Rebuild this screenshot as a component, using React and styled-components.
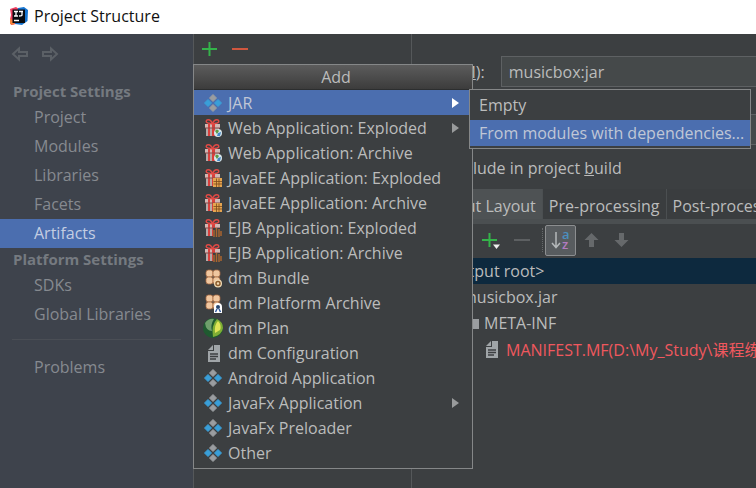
import { Fragment } from "react";
import styled, { createGlobalStyle, css } from "styled-components";

const GlobalStyle = createGlobalStyle`
  * {
    box-sizing: border-box;
  }
  body {
    margin: 0;
    background: #3c3f41;
    font-family: "Open Sans", "Noto Sans CJK SC", sans-serif;
    font-size: 16px;
    overflow: hidden;
  }
  button,
  input {
    font: inherit;
    color: inherit;
  }
`;

const Window = styled.div`
  display: flex;
  flex-direction: column;
  min-height: 100vh;
  color: #bbbcbc;
`;

const TitleBar = styled.header`
  display: flex;
  align-items: center;
  gap: 5px;
  height: 34px;
  padding: 0 9px 2px;
  background: #fff;
  color: #111;
`;

const Title = styled.h1`
  margin: 0;
  font-size: 16px;
  font-weight: 400;
`;

const Body = styled.main`
  display: flex;
  flex: 1;
`;

const Sidebar = styled.nav`
  flex: 0 0 193px;
  background: #3e434c;
  color: #868a90;
`;

const History = styled.div`
  display: flex;
  gap: 14px;
  height: 46px;
  padding: 11px 0 0 11px;
`;

const IconButton = styled.button`
  display: flex;
  align-items: center;
  justify-content: center;
  height: 18px;
  padding: 0;
  border: 0;
  background: none;
`;

const SidebarHeading = styled.h2`
  margin: 0;
  padding-left: 13px;
  font-size: 15px;
  font-weight: 700;
  line-height: 23px;
  color: #757a80;
`;

const SidebarItem = styled.a`
  display: block;
  padding-left: 34px;
  line-height: 29px;
  color: ${({ $active }) => ($active ? "#c3cde2" : "inherit")};
  background: ${({ $active }) => ($active ? "#4b6eaf" : "none")};
  text-decoration: none;
`;

const SidebarDivider = styled.hr`
  height: 1px;
  margin: 10px 12px 13px;
  border: 0;
  background: #4a4e55;
`;

const ArtifactList = styled.section`
  position: relative;
  flex: 0 0 219px;
  border: solid #55585a;
  border-width: 0 1px;
`;

const ListToolbar = styled.div`
  display: flex;
  gap: 11px;
  padding: 6px 7px;
`;

const popup = css`
  position: absolute;
  border: 1px solid #858788;
  background: #3c3f41;
`;

const Menu = styled.div`
  ${popup}
  z-index: 1;
  top: 30px;
  left: -1px;
  width: 280px;
  padding-bottom: 3px;
`;

const MenuTitle = styled.div`
  height: 25px;
  padding-left: 6px;
  border-bottom: 1px solid #2c2e2f;
  background: linear-gradient(#5c5c5c, #3c3c3c);
  line-height: 24px;
  text-align: center;
`;

const MenuItem = styled.button`
  display: flex;
  align-items: center;
  width: 100%;
  height: 25px;
  padding: 0 12px 0 8px;
  border: 0;
  background: ${({ $active }) => ($active ? "#4b6eaf" : "none")};
  color: ${({ $active }) => ($active ? "#c0c7d6" : "inherit")};
  text-align: left;
  white-space: nowrap;

  svg {
    flex: none;
  }
`;

const MenuLabel = styled.span`
  flex: 1;
  margin-left: 4px;
`;

const Submenu = styled.div`
  ${popup}
  z-index: 2;
  top: 24px;
  left: 275px;
  width: 282px;
  padding-bottom: 2px;
`;

const SubmenuItem = styled(MenuItem)`
  height: ${({ $active }) => ($active ? "26px" : "30px")};
  padding: 0 4px 0 9px;
`;

const Details = styled.section`
  display: flex;
  flex: 1;
  flex-direction: column;
  min-width: 0;
  overflow: hidden;
  white-space: nowrap;
`;

const Field = styled.div`
  display: flex;
  align-items: center;
  gap: 16px;
  margin-top: 22px;
`;

const FieldLabel = styled.label`
  flex: 0 0 72px;
  display: flex;
  justify-content: flex-end;
`;

const TextInput = styled.input`
  flex: 1;
  min-width: 0;
  height: 31px;
  padding: 0 7px;
  border: 1px solid #5e6163;
  border-right: 0;
  background: #45494a;
`;

const DirectoryField = styled(Field)`
  margin-top: 27px;
`;

const CheckRow = styled.label`
  display: flex;
  align-items: center;
  gap: 6px;
  height: 28px;
  margin: 9px 0 0 17px;

  input {
    width: 16px;
    height: 16px;
    margin: 0;
  }
`;

const Tabs = styled.div`
  display: flex;
  height: 35px;
  margin-top: 7px;
  padding-left: 10px;
  border-bottom: 5px solid #4b4f51;
`;

const Tab = styled.button`
  flex: none;
  padding: 3px 6px 0;
  border: 0;
  border-right: 1px solid #4b4f51;
  background: ${({ $active }) => ($active ? "#4e5254" : "#3a3d3f")};
`;

const Toolbar = styled.div`
  display: flex;
  align-items: center;
  gap: 7px;
  height: 34px;
  padding: 0 0 2px 69px;
`;

const ToolGroup = styled.div`
  display: flex;
  align-items: center;
  gap: ${({ $gap }) => $gap}px;
`;

const ToolDivider = styled.span`
  height: 24px;
  margin-left: 4px;
  border-left: 1px dotted #66696b;
`;

const SortButton = styled(IconButton)`
  width: 31px;
  height: 31px;
  border: 1px solid #8c8e90;
  border-radius: 2px;
  background: #585c5f;
`;

const Tree = styled.ul`
  margin: 0;
  padding: 0;
  list-style: none;
`;

const TreeRow = styled.li`
  display: flex;
  align-items: center;
  gap: 4px;
  height: 26px;
  padding-left: ${({ $level }) => 2 + $level * 22}px;
  color: ${({ $missing }) => ($missing ? "#f0585e" : "inherit")};
  background: ${({ $active }) => ($active ? "#0d293e" : "none")};

  svg {
    flex: none;
  }
`;

const ArrowOutline = ({ flip }) => (
  <svg width="17" height="16" viewBox="0 0 17 16" fill="none" stroke="#5b6066" strokeWidth="2">
    <path d={flip ? "M15 8 9 2.500V6H1V10H9V13.500Z" : "M2 8 8 2.500V6H16V10H8V13.500Z"} />
  </svg>
);

const PlusIcon = ({ menu }) => (
  <svg width="20" height="18" viewBox="0 0 20 18">
    <path d="M8.500 2V16M1 9H16" stroke="#34b34a" strokeWidth="2" />
    {menu && <path d="M12 13.500H19L15.500 18Z" fill="#eee" />}
  </svg>
);

const MinusIcon = ({ color }) => (
  <svg width="17" height="18" viewBox="0 0 17 18">
    <path d="M0 9H16" stroke={color} strokeWidth="2" />
  </svg>
);

const BlockArrow = ({ down }) => (
  <svg width="17" height="18" viewBox="0 0 17 18" fill="#66696b">
    <path d={down ? "M6 2H11V9H15.500L8.500 16 1.500 9H6Z" : "M6 16H11V9H15.500L8.500 2 1.500 9H6Z"} />
  </svg>
);

const SortIcon = () => (
  <svg width="22" height="28" viewBox="0 0 22 28" fontFamily="Open Sans" fontSize="13" fontWeight="600">
    <path d="M6 6V21M2 17 6 21.500 10 17" fill="none" stroke="#b4b8ba" strokeWidth="1.500" />
    <text x="12" y="13" fill="#4b8fc0">a</text>
    <text x="12" y="23" fill="#b27bc0">z</text>
  </svg>
);

const LogoIcon = () => (
  <svg width="20" height="20" viewBox="0 0 20 20">
    <path d="M1 3 7 1 10 3 5 10 7 18 2 19 1 13 2 9Z" fill="#ef3f61" />
    <path d="M9 2 15 1 19 4 18.500 15 13 19 6 18Z" fill="#1675d1" />
    <path d="M1 12 6 17 4 19 1 18Z" fill="#f5843b" />
    <path d="M3.500 3.500H16V17H3.500Z" fill="#080b10" />
    <path d="M5 5.500H9M7 5.500V10M5 10H9M10 5.500H14M13 5.500V9Q13 10 10 10M5 14.500H10" fill="none" stroke="#fff" strokeWidth="1.300" />
  </svg>
);

const DiamondsIcon = () => (
  <svg width="22" height="22" viewBox="0 0 22 22" strokeLinejoin="round" strokeWidth="1">
    <path d="M11 2.500 14.500 6 11 9.500 7.500 6ZM11 12.500 14.500 16 11 19.500 7.500 16Z" fill="#9a9da0" stroke="#9a9da0" />
    <path d="M6 7.500 9.500 11 6 14.500 2.500 11ZM16 7.500 19.500 11 16 14.500 12.500 11Z" fill="#3a9fd8" stroke="#3a9fd8" />
  </svg>
);

const badges = {
  web: (
    <>
      <circle cx="16" cy="16" r="4" fill="#d8e6ea" />
      <path d="M13 14Q15 11 17 14L15 17Z" fill="#5b9b48" />
      <path d="M16 16 19 15 18 19 15 19Z" fill="#4589c7" />
    </>
  ),
  javaee: (
    <>
      <path d="M11 11H20V20H11Z" fill="#e5a550" />
      <path d="M11.500 14.500H20M11.500 17H20M14.500 11.500V20M17 11.500V20" stroke="#7b4a1c" strokeWidth="0.800" />
    </>
  ),
  ejb: (
    <>
      <path d="M11 11H20V20H11Z" fill="#3c3f41" />
      <path d="M12 20V13M14.500 20V11M17 20V12M19 19V14" stroke="#a9662f" strokeWidth="1.500" />
    </>
  ),
};

const GiftIcon = ({ badge }) => (
  <svg width="22" height="22" viewBox="0 0 22 22">
    <path d="M3 7H18V11H3Z" fill="#d0b8b4" />
    <path d="M4 11H17V19H4Z" fill="#b5aaa8" />
    <path d="M6 7H8V19H6ZM10 7H13V19H10Z" fill="#d9403c" />
    <path d="M3 11H18" stroke="#8b4b49" />
    <path d="M10.500 7Q9 2 5 3 3 5 6 6ZM10.500 7Q12 2 16 3 18 5 15 6Z" fill="none" stroke="#e04a45" strokeWidth="1.500" />
    {badges[badge]}
  </svg>
);

const BundleIcon = ({ platform }) => (
  <svg width="22" height="22" viewBox="0 0 22 22">
    <g fill="#f0c7a0" stroke="#a86b43" strokeWidth="0.800">
      <rect x="4" y="3" width="7" height="7" rx="2.500" />
      <rect x="11" y="3" width="7" height="7" rx="2.500" />
      <rect x="4" y="10" width="7" height="7" rx="2.500" />
      <rect x="11" y="10" width="7" height="7" rx="2.500" />
    </g>
    {platform ? (
      <>
        <path d="M12 21V15Q12 11 16 11T20 15V21Z" fill="#fff" />
        <path d="M13.500 20 15 17M18.500 20 17 17" stroke="#345da0" strokeWidth="1.500" />
        <circle cx="16" cy="15" r="2" fill="#27466f" />
      </>
    ) : (
      <>
        <circle cx="16" cy="16.500" r="4" fill="#f1dbb5" />
        <circle cx="16" cy="16.500" r="2" fill="none" stroke="#8e5d2d" strokeWidth="1.500" />
      </>
    )}
  </svg>
);

const PlanIcon = () => (
  <svg width="22" height="22" viewBox="0 0 22 22">
    <circle cx="11" cy="11" r="10" fill="#1f5a30" />
    <path d="M3 6Q7 1 12 2 8 8 10 14 4 14 3 6Z" fill="#6f9f6c" />
    <path d="M11 20Q9 8 15 2 21 5 21 11 20 18 11 20Z" fill="#7fae35" />
    <path d="M13 16Q12 8 16 4 20 8 18 13Z" fill="#dfe457" />
  </svg>
);

const FileIcon = () => (
  <svg width="22" height="22" viewBox="0 0 22 22">
    <path d="M12 3H18V20H6V9H12Z" fill="#a0a5a8" />
    <path d="M6 8 11 3V8Z" fill="#a0a5a8" />
    <path d="M8 12H16M8 14.500H16M8 17H14" stroke="#3c3f41" strokeWidth="1.300" />
  </svg>
);

const FolderIcon = () => (
  <svg width="22" height="16" viewBox="0 0 22 16">
    <path d="M5 2H11L13 4H21V14H5Z" fill="#9a9da0" />
  </svg>
);

const Chevron = ({ active }) => (
  <svg width="9" height="12" viewBox="0 0 9 12">
    <path d="M1 1 8 6 1 11Z" fill={active ? "#fff" : "#999b9c"} />
  </svg>
);

const sections = [
  {
    title: "Project Settings",
    items: ["Project", "Modules", "Libraries", "Facets", "Artifacts"],
  },
  { title: "Platform Settings", items: ["SDKs", "Global Libraries"] },
];

const artifactTypes = [
  { label: "JAR", icon: <DiamondsIcon />, submenu: true },
  { label: "Web Application: Exploded", icon: <GiftIcon badge="web" />, submenu: true },
  { label: "Web Application: Archive", icon: <GiftIcon badge="web" /> },
  { label: "JavaEE Application: Exploded", icon: <GiftIcon badge="javaee" /> },
  { label: "JavaEE Application: Archive", icon: <GiftIcon badge="javaee" /> },
  { label: "EJB Application: Exploded", icon: <GiftIcon badge="ejb" /> },
  { label: "EJB Application: Archive", icon: <GiftIcon badge="ejb" /> },
  { label: "dm Bundle", icon: <BundleIcon /> },
  { label: "dm Platform Archive", icon: <BundleIcon platform /> },
  { label: "dm Plan", icon: <PlanIcon /> },
  { label: "dm Configuration", icon: <FileIcon /> },
  { label: "Android Application", icon: <DiamondsIcon /> },
  { label: "JavaFx Application", icon: <DiamondsIcon />, submenu: true },
  { label: "JavaFx Preloader", icon: <DiamondsIcon /> },
  { label: "Other", icon: <DiamondsIcon /> },
];

const AddMenu = () => (
  <Menu role="menu" aria-label="Add">
    <MenuTitle>Add</MenuTitle>
    {artifactTypes.map(({ label, icon, submenu }) => (
      <MenuItem key={label} role="menuitem" $active={label === "JAR"}>
        {icon}
        <MenuLabel>{label}</MenuLabel>
        {submenu && <Chevron active={label === "JAR"} />}
      </MenuItem>
    ))}
    <Submenu role="menu" aria-label="JAR">
      <SubmenuItem role="menuitem">Empty</SubmenuItem>
      <SubmenuItem role="menuitem" $active>
        From modules with dependencies...
      </SubmenuItem>
    </Submenu>
  </Menu>
);

const ArtifactDetails = () => (
  <Details>
    <Field>
      <FieldLabel htmlFor="name">
        Name(<u>M</u>):
      </FieldLabel>
      <TextInput id="name" defaultValue="musicbox:jar" />
    </Field>
    <DirectoryField>
      <FieldLabel htmlFor="directory">Output:</FieldLabel>
      <TextInput id="directory" defaultValue="D:\My_Study\musicbox\out\java\v" />
    </DirectoryField>
    <CheckRow>
      <input type="checkbox" />
      <span>
        Include in project <u>b</u>uild
      </span>
    </CheckRow>
    <Tabs role="tablist">
      <Tab role="tab" $active>Output Layout</Tab>
      <Tab role="tab">Pre-processing</Tab>
      <Tab role="tab">Post-processing</Tab>
    </Tabs>
    <Toolbar>
      <ToolGroup $gap={13}>
        <IconButton aria-label="Add copy of"><PlusIcon menu /></IconButton>
        <IconButton aria-label="Remove"><MinusIcon color="#5d6062" /></IconButton>
      </ToolGroup>
      <ToolGroup $gap={2}>
        <ToolDivider />
        <SortButton aria-label="Sort by name"><SortIcon /></SortButton>
      </ToolGroup>
      <ToolGroup $gap={13}>
        <IconButton aria-label="Move up"><BlockArrow /></IconButton>
        <IconButton aria-label="Move down"><BlockArrow down /></IconButton>
      </ToolGroup>
    </Toolbar>
    <Tree>
      <TreeRow $level={0} $active><DiamondsIcon />&lt;output root&gt;</TreeRow>
      <TreeRow $level={1}><FolderIcon />musicbox.jar</TreeRow>
      <TreeRow $level={2}><FolderIcon />META-INF</TreeRow>
      <TreeRow $level={3} $missing><FileIcon />MANIFEST.MF(D:\My_Study\课程练习</TreeRow>
    </Tree>
  </Details>
);

const App = () => (
  <Window>
    <GlobalStyle />
    <TitleBar>
      <LogoIcon />
      <Title>Project Structure</Title>
    </TitleBar>
    <Body>
      <Sidebar>
        <History>
          <IconButton aria-label="Back"><ArrowOutline /></IconButton>
          <IconButton aria-label="Forward"><ArrowOutline flip /></IconButton>
        </History>
        {sections.map(({ title, items }) => (
          <Fragment key={title}>
            <SidebarHeading>{title}</SidebarHeading>
            {items.map((item) => (
              <SidebarItem key={item} href="#" $active={item === "Artifacts"}>
                {item}
              </SidebarItem>
            ))}
          </Fragment>
        ))}
        <SidebarDivider />
        <SidebarItem href="#">Problems</SidebarItem>
      </Sidebar>
      <ArtifactList>
        <ListToolbar>
          <IconButton aria-label="Add"><PlusIcon /></IconButton>
          <IconButton aria-label="Remove"><MinusIcon color="#d0573f" /></IconButton>
        </ListToolbar>
        <AddMenu />
      </ArtifactList>
      <ArtifactDetails />
    </Body>
  </Window>
);

export default App;
